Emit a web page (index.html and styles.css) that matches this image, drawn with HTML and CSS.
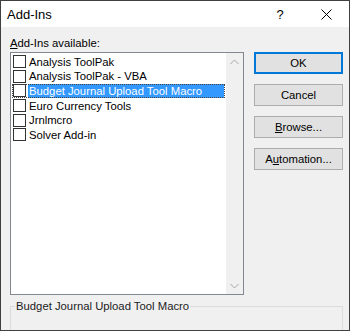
FILE: index.html
```html
<!DOCTYPE html>
<html lang="en">
<head>
  <meta charset="UTF-8" />
  <title>Add-Ins</title>
  <link rel="stylesheet" href="styles.css">
</head>
<body>

<div class="dialog">
  <!-- title bar -->
  <div class="titlebar">
    <span class="title">Add-Ins</span>
    <span class="tb-btn">?</span>
    <span class="tb-btn">
      <svg width="11" height="11" viewBox="0 0 11 11"><path d="M0.5 0.5 L10.5 10.5 M10.5 0.5 L0.5 10.5" stroke="#000" stroke-width="1" fill="none"/></svg>
    </span>
  </div>

  <div class="content">
    <div class="label"><u>A</u>dd-Ins available:</div>

    <div class="main">
      <div class="listbox">
        <ul class="items">
          <li class="item"><span class="check"></span><span class="name">Analysis ToolPak</span></li>
          <li class="item"><span class="check"></span><span class="name">Analysis ToolPak - VBA</span></li>
          <li class="item selected"><span class="check"></span><span class="name">Budget Journal Upload Tool Macro</span></li>
          <li class="item"><span class="check"></span><span class="name">Euro Currency Tools</span></li>
          <li class="item"><span class="check"></span><span class="name">Jrnlmcro</span></li>
          <li class="item"><span class="check"></span><span class="name">Solver Add-in</span></li>
        </ul>
        <div class="scrollbar">
          <span class="arrow"><svg width="9" height="6" viewBox="0 0 9 6"><polyline points="0.5,5 4.5,1 8.5,5" stroke="#a6a6a6" fill="none"/></svg></span>
          <span class="arrow"><svg width="9" height="6" viewBox="0 0 9 6"><polyline points="0.5,1 4.5,5 8.5,1" stroke="#a6a6a6" fill="none"/></svg></span>
        </div>
      </div>

      <div class="buttons">
        <button class="btn default">OK</button>
        <button class="btn">Cancel</button>
        <button class="btn"><u>B</u>rowse...</button>
        <button class="btn">A<u>u</u>tomation...</button>
      </div>
    </div>

    <fieldset class="desc">
      <legend>Budget Journal Upload Tool Macro</legend>
    </fieldset>
  </div>
</div>

</body>
</html>
```

FILE: styles.css
```css
body {
  margin: 0;
  background: #fff;
}

.dialog {
  width: 350px;
  height: 331px;
  box-sizing: border-box;
  border: 1px solid #404040;
  background: #f0f0f0;
  font-family: "Liberation Sans", Arial, sans-serif;
  font-size: 11.3px;
  color: #000;
  overflow: hidden;
}

/* title bar */
.titlebar {
  display: flex;
  align-items: center;
  height: 26px;
  background: #fff;
}

.title {
  flex: 1;
  padding-left: 6px;
  font-size: 13px;
}

.tb-btn {
  width: 46px;
  height: 26px;
  display: flex;
  align-items: center;
  justify-content: center;
  font-size: 13px;
}

.content {
  padding: 9px 6px 0 9px;
}

.label {
  line-height: 14px;
  margin-bottom: 2px;
}

.main {
  display: flex;
  gap: 10px;
}

/* list box */
.listbox {
  width: 234px;
  height: 243px;
  box-sizing: border-box;
  border: 1px solid #828790;
  background: #fff;
  display: flex;
}

.items {
  list-style: none;
  margin: 0;
  padding: 1.3px 0 0;
  flex: 1;
}

.item {
  display: flex;
  align-items: center;
  height: 14.67px;
  margin: 0 1px;
}

.item.selected {
  outline: 1px dotted #444;
  outline-offset: -1px;
}

.check {
  width: 13px;
  height: 13px;
  box-sizing: border-box;
  border: 1px solid #333;
  background: #fff;
  margin-left: 1px;
}

.name {
  flex: 1;
  margin: 0 1px 0 2px;
  padding: 0 1px;
  line-height: 14px;
  white-space: nowrap;
}

.item.selected .name {
  background: #3399ff;
  color: #fff;
}

.scrollbar {
  width: 17px;
  background: #f0f0f0;
  display: flex;
  flex-direction: column;
  justify-content: space-between;
}

.arrow {
  height: 17px;
  display: flex;
  align-items: center;
  justify-content: center;
}

/* buttons */
.buttons {
  display: flex;
  flex-direction: column;
  gap: 10px;
  width: 89px;
}

.btn {
  height: 22px;
  box-sizing: border-box;
  border: 1px solid #adadad;
  background: #e1e1e1;
  font: inherit;
  color: #000;
  padding: 0;
}

.btn.default {
  border: 2px solid #0078d7;
}

/* description group */
.desc {
  margin: 4px 0 0;
  padding: 0 0 0 4px;
  border: 1px solid #dcdcdc;
  height: 40px;
  min-width: 0;
}

.desc legend {
  padding: 0 1px;
  line-height: 14px;
  color: #222;
}
```
